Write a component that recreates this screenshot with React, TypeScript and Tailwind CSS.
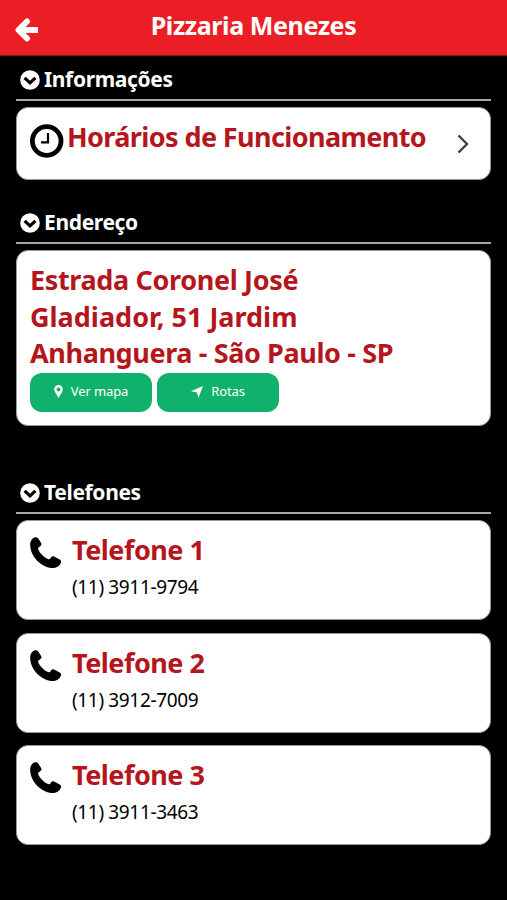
import type { ReactNode } from "react";

const phones = [
  { label: "Telefone 1", number: "(11) 3911-9794" },
  { label: "Telefone 2", number: "(11) 3912-7009" },
  { label: "Telefone 3", number: "(11) 3911-3463" },
];

function BackIcon() {
  return (
    <svg className="mt-[5px] ml-px h-6 w-6" viewBox="0 0 24 24" fill="none" stroke="currentColor" strokeWidth="6" strokeLinecap="round" strokeLinejoin="round">
      <path d="M12 3.500 3.500 12l8.500 8.500" />
      <path d="M5 12h18" strokeLinecap="butt" />
    </svg>
  );
}

function ChevronDownIcon() {
  return (
    <svg className="mb-px h-5 w-5 shrink-0" viewBox="0 0 20 20">
      <circle cx="10" cy="10" r="9.8" fill="#fff" />
      <path d="m4.600 7.800 5.400 5.100 5.400-5.100" fill="none" stroke="#000" strokeWidth="3.2" />
    </svg>
  );
}

function ClockIcon() {
  return (
    <svg className="mt-0.5 h-[34px] w-[34px] shrink-0" viewBox="0 0 34 34" fill="none" stroke="#000">
      <circle cx="16.700" cy="17" r="14.300" strokeWidth="4.800" />
      <path d="M18 9v9.400h-7" strokeWidth="2.2" />
    </svg>
  );
}

function PinIcon() {
  return (
    <svg className="h-[13px] w-[9px]" viewBox="0 0 9 13" fill="currentColor">
      <path fillRule="evenodd" d="M4.500 0A4.300 4.300 0 0 1 8.800 4.300C8.800 6.500 6.500 9 4.500 13 2.500 9 .2 6.500.2 4.300A4.300 4.300 0 0 1 4.500 0zm0 2.400a2 2 0 1 0 0 4 2 2 0 0 0 0-4z" />
    </svg>
  );
}

function RouteIcon() {
  return (
    <svg className="h-3 w-3" viewBox="0 0 12 12" fill="currentColor">
      <path d="M12 0 7.400 12 6 6.400 0 5.200z" />
    </svg>
  );
}

function PhoneIcon() {
  return (
    <svg className="mt-px h-8 w-8 shrink-0" viewBox="0 0 32 32" fill="#000">
      <path d="M5.500.3C7.200.1 8 .9 8.800 2.300L11.100 6c.8 1.600.3 2.400-.9 3.200C8.600 10 7.700 10.900 8.300 12.500c1.800 3.900 5.600 7.900 9.700 9.500 1.300.4 2.100.1 2.700-1 .8-1.600 1.800-2.300 3.400-1.500l5.600 3.100c1.500.8 1.800 2.100 1.100 3.500-1.500 3.300-4.600 5-8 5C12 30.700.2 20 .2 7.700.2 4 2.300.8 5.500.3z" />
    </svg>
  );
}

function SectionTitle({ children }: { children: ReactNode }) {
  return (
    <h2 className="flex h-[38px] items-center gap-1 border-b-2 border-[#a8a8a8] px-1 pb-0.5 text-[21px] font-bold tracking-[-0.35px] text-white">
      <ChevronDownIcon />
      <span>{children}</span>
    </h2>
  );
}

function Card({ className, children }: { className: string; children: ReactNode }) {
  return <div className={`rounded-xl border border-[#999] bg-white px-[13px] ${className}`}>{children}</div>;
}

export default function App() {
  return (
    <div className="h-[900px] w-[507px] overflow-hidden bg-black font-['Noto_Sans',sans-serif] text-[#b5161d]">
      <header className="grid h-14 grid-cols-[40px_1fr_40px] items-center border-b border-[#7d1a1a] bg-[#eb1e25] px-3.5 text-white">
        <BackIcon />
        <h1 className="pb-1 text-center text-[25px] font-bold leading-none tracking-[-0.4px]">
          <span>Pizzaria Menezes</span>
        </h1>
      </header>

      <main className="px-4 pt-[7px]">
        <section>
          <SectionTitle>Informações</SectionTitle>
          <Card className="mt-1.5 flex h-[73px] justify-between">
            <div className="flex pt-3.5">
              <ClockIcon />
              <span className="ml-[3px] text-[27px] font-bold leading-[30px] tracking-[-0.6px]">Horários de Funcionamento</span>
            </div>
            <svg className="mt-[26px] mr-2 h-5 w-3" viewBox="0 0 12 20" fill="none" stroke="#4a3428" strokeWidth="2.3">
              <path d="m1.500 1.500 8.500 8.500-8.500 8.500" />
            </svg>
          </Card>
        </section>

        <section className="mt-[26px]">
          <SectionTitle>Endereço</SectionTitle>
          <Card className="mt-1.5 h-[176px] pt-[11px]">
            <p className="text-[27px] font-bold leading-[36.5px]">
              <span className="tracking-[-0.35px]">Estrada Coronel José</span>
              <br />
              <span>Gladiador, 51 Jardim</span>
              <br />
              <span className="tracking-[-0.38px]">Anhanguera - São Paulo - SP</span>
            </p>
            <div className="mt-px flex gap-[5px] text-[13px] tracking-[-0.1px] text-white">
              <button className="flex h-[39px] w-[122px] items-center justify-center gap-2 rounded-xl bg-[#10b26b] pb-px">
                <PinIcon />
                Ver mapa
              </button>
              <button className="flex h-[39px] w-[122px] items-center justify-center gap-2 rounded-xl bg-[#10b26b] pb-px">
                <RouteIcon />
                Rotas
              </button>
            </div>
          </Card>
        </section>

        <section className="mt-[50px]">
          <SectionTitle>Telefones</SectionTitle>
          <div className="mt-1.5 flex flex-col gap-[12.5px]">
            {phones.map((phone) => (
              <Card key={phone.label} className="flex h-[100px] gap-2.5 pt-[15px]">
                <PhoneIcon />
                <div>
                  <h3 className="text-[27px] font-bold leading-7 tracking-[-0.5px]">{phone.label}</h3>
                  <p className="mt-[9px] text-[19px] leading-7 tracking-[-0.35px] text-black">{phone.number}</p>
                </div>
              </Card>
            ))}
          </div>
        </section>
      </main>
    </div>
  );
}
